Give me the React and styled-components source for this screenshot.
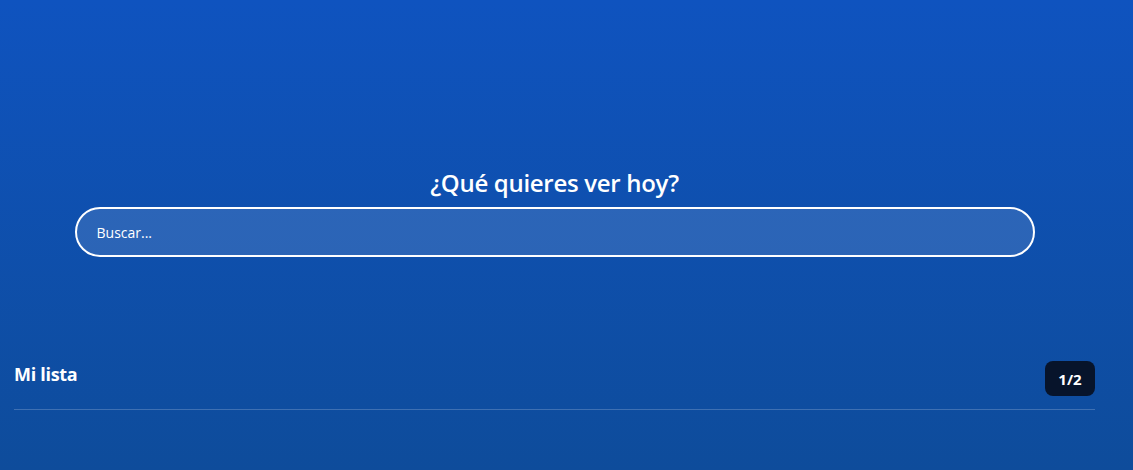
import React from "react";
import styled, { createGlobalStyle } from "styled-components";

const GlobalStyle = createGlobalStyle`
  html, body {
    margin: 0;
    padding: 0;
  }
  body {
    font-family: "Open Sans", "Noto Sans", sans-serif;
    background: #0e4f9f;
  }
  * {
    box-sizing: border-box;
  }
`;

const StyledPage = styled.div`
  min-height: 100vh;
  padding: 0 38px 0 14px;
  background: linear-gradient(180deg, #0f53bf 0%, #0e4c9b 100%);
  color: #fff;
`;

const StyledHero = styled.section`
  display: flex;
  flex-direction: column;
  align-items: center;
  padding-top: 165px;
`;

const StyledTitle = styled.h2`
  margin: 0 0 7px;
  font-size: 24px;
  font-weight: 600;
  line-height: 35px;
  letter-spacing: -0.3px;
`;

const StyledSearch = styled.input`
  width: 100%;
  max-width: 960px;
  height: 50px;
  padding: 0 20px;
  border: 2px solid #fff;
  border-radius: 25px;
  background: rgba(255, 255, 255, 0.12);
  color: #fff;
  font-family: inherit;
  font-size: 14px;
  outline: none;

  &::placeholder {
    color: #fff;
    opacity: 1;
  }
`;

const StyledSection = styled.section`
  margin-top: 104px;
`;

const StyledSectionHeader = styled.div`
  display: flex;
  align-items: flex-start;
  justify-content: space-between;
  padding-bottom: 13px;
  border-bottom: 1px solid rgba(255, 255, 255, 0.2);
`;

const StyledSectionTitle = styled.h3`
  margin: 0;
  font-size: 18px;
  font-weight: 700;
  line-height: 26px;
  letter-spacing: -0.3px;
`;

const StyledBadge = styled.span`
  display: inline-flex;
  align-items: center;
  justify-content: center;
  width: 50px;
  height: 35px;
  border-radius: 8px;
  background: #07142b;
  font-size: 15px;
  font-weight: 700;
`;

export default function App() {
  return (
    <>
      <GlobalStyle />
      <StyledPage>
        <StyledHero>
          <StyledTitle>¿Qué quieres ver hoy?</StyledTitle>
          <StyledSearch type="text" placeholder="Buscar..." />
        </StyledHero>
        <StyledSection>
          <StyledSectionHeader>
            <StyledSectionTitle>Mi lista</StyledSectionTitle>
            <StyledBadge>1/2</StyledBadge>
          </StyledSectionHeader>
        </StyledSection>
      </StyledPage>
    </>
  );
}
